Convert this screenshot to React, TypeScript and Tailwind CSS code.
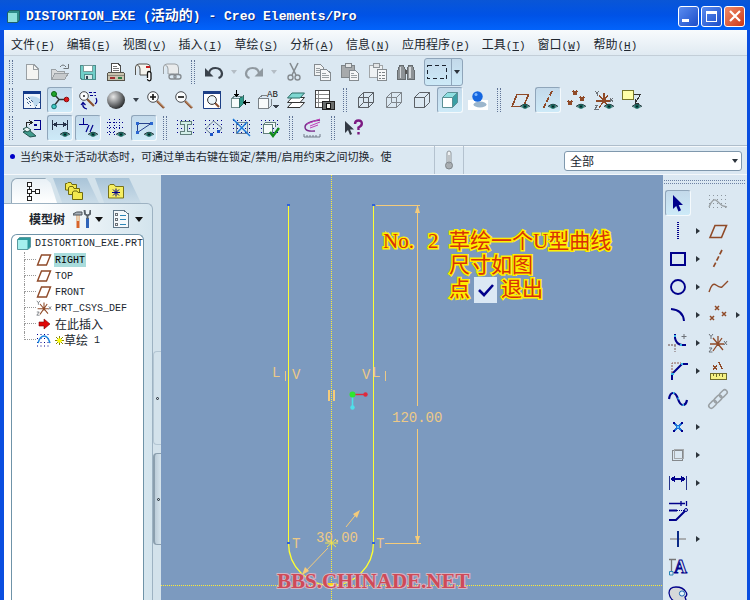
import type { ReactNode } from "react";
import clsx from "clsx";

type Tool = { icon?: ReactNode; label: string; active?: boolean; menu?: boolean };

const NAVY = "#00008b";
const BROWN = "#8f4a28";
const GRAY = "#9aa0a4";
const INK = "#3a424c";

/* ---------- icons ---------- */

function Icon({ children, soft }: { children: ReactNode; soft?: boolean }) {
  return (
    <svg
      viewBox="0 0 20 20"
      className="size-5 shrink-0 overflow-visible"
      fill="none"
      shapeRendering={soft ? "auto" : "crispEdges"}
      aria-hidden="true"
    >
      {children}
    </svg>
  );
}

function Eye() {
  return (
    <g shapeRendering="auto">
      <path d="M10 16.5Q15 11.5 20 16.5Q15 20.5 10 16.5Z" fill="#5f8f8c" />
      <path d="M10 16.5Q15 12 20 16.5" stroke="#26393f" />
      <circle cx="15" cy="16.5" r="2.3" fill="#15695f" />
      <circle cx="15" cy="16.5" r="1" fill="#0a1c22" />
    </g>
  );
}

function DotGrid({ color = NAVY }: { color?: string }) {
  return (
    <path
      d="M1.5 2V18M5.5 2V18M9.5 2V18M13.5 2V18M17.5 2V18"
      stroke={color}
      strokeDasharray="1 3"
    />
  );
}

function Cube({ front = "#f4f6f8", side = "#c9ced4", top = "#e4e8ec", line = "#5b6066", back = false }) {
  return (
    <g strokeLinejoin="round" stroke={line} shapeRendering="auto">
      <path d="M2.5 7.5L7.5 2.5H17.5L12.5 7.5Z" fill={top} />
      <path d="M12.5 7.5L17.5 2.5V12.5L12.5 17.5Z" fill={side} />
      <path d="M2.5 7.5H12.5V17.5H2.5Z" fill={front} />
      {back && <path d="M7.5 2.5V12.5H17.5M7.5 12.5L2.5 17.5" />}
    </g>
  );
}

function Lens({ sign }: { sign?: string }) {
  return (
    <Icon soft>
      <path d="M11 11L18 18" stroke="#8a5030" strokeWidth="2.4" />
      <path d="M11.5 11L18 17.2" stroke="#e2c29a" strokeWidth="0.8" />
      <circle cx="7" cy="7" r="5.3" fill="#fafcfd" stroke="#4a4d52" />
      {sign && <path d={sign} stroke="#111" strokeWidth="1.6" />}
    </Icon>
  );
}

const planeShape = <path d="M2 16.5L7 4.5H18.5L13.5 16.5Z" stroke={BROWN} strokeWidth="1.6" />;
const axisShape = <path d="M14 1L5 19" stroke={BROWN} strokeWidth="1.7" strokeDasharray="5 2" />;
const pointsShape = (
  <path
    d="M7 1L11 5M11 1L7 5M14 7L18 11M18 7L14 11M2 11L6 15M6 11L2 15"
    stroke={BROWN}
    strokeWidth="1.5"
  />
);
const csysShape = (
  <g>
    <path d="M2 11H16M5 18L14 5M5 5L15 17M10 3V13" stroke={BROWN} strokeWidth="1.3" />
    <path d="M1 1L3 3.5L5 1M3 3.5V6M16 8L19 12M19 8L16 12M1 15H4L1 19H4.5" stroke="#6c7177" />
  </g>
);

const pageNew = (
  <Icon>
    <path d="M4.5 2.5H12L16.5 7V17.5H4.5Z" fill="#f4f4f2" stroke={GRAY} />
    <path d="M11.5 2.5V7.5H16.5" stroke={GRAY} />
  </Icon>
);
const folderOpen = (
  <Icon>
    <path d="M1.5 17.5V7.5H5.5L7 9H14.5V11" fill="#d8dadb" stroke={GRAY} />
    <path d="M1.5 17.5L5 11H18.5L14.5 17.5Z" fill="#c7cacc" stroke={GRAY} />
    <path d="M10 5Q13 1 16 5M13.5 6.5H18.5V2" stroke="#6f7579" shapeRendering="auto" />
  </Icon>
);
const disk = (
  <Icon>
    <path d="M2.5 3.5H17.5V17.5H4L2.5 16Z" fill="#70cfc9" stroke="#4d8d8c" />
    <path d="M5.5 3.5H14.5V9.5H5.5Z" fill="#fff" stroke="#7a9b9b" />
    <path d="M6 12.5H14V17.5H6Z" fill="#d9e9ea" stroke="#4d8d8c" />
    <path d="M8.5 14V17" stroke="#345" strokeWidth="2" />
  </Icon>
);
const printer = (
  <Icon>
    <path d="M5.5 10.5V1.5H12L14.5 4V10.5Z" fill="#fff" stroke="#4b4b4b" />
    <path d="M7 4.5H11M7 6.5H13M7 8.5H13" stroke="#777" />
    <path d="M2.5 10.5H17.5L18.5 12V18.5H1.5V12Z" fill="#c8c3ae" stroke="#54524a" />
    <path d="M2 13.5H18" stroke="#8b877a" />
    <path d="M4 15.5H9" stroke="#a03030" strokeWidth="2" />
    <path d="M12 15.5H16" stroke="#2b7a45" strokeWidth="2" />
  </Icon>
);
const mailClip = (
  <Icon soft>
    <path d="M1.5 13V5Q2 2 5 2H13Q16.5 2 16.5 6V13H6V7Q6 3.5 3.5 3.5" fill="#f5f4ee" stroke="#55534e" />
    <path d="M12 5H16" stroke="#c62020" strokeWidth="2" />
    <path d="M13.5 16V11Q13.5 9.5 15 9.5T17 11V17Q17 18.8 15.3 18.8T13.5 17" stroke="#111" strokeWidth="1.3" fill="#fff" />
  </Icon>
);
const mailLink = (
  <Icon soft>
    <path d="M1.5 12V5Q2 2 5 2H13Q16.5 2 16.5 6V12H6V7Q6 3.5 3.5 3.5" fill="#e9ebec" stroke={GRAY} />
    <rect x="7" y="12.5" width="7" height="4.5" rx="2.2" stroke="#858b90" strokeWidth="1.3" />
    <rect x="12" y="12.5" width="7" height="4.5" rx="2.2" stroke="#858b90" strokeWidth="1.3" />
  </Icon>
);
const undo = (
  <Icon soft>
    <path d="M5 11Q6 6 11.5 6T18 11.5Q18 15 14.5 16" stroke={INK} strokeWidth="2.2" />
    <path d="M1 6V14.5H9.5Z" fill={INK} />
  </Icon>
);
const redo = (
  <Icon soft>
    <path d="M15 11Q14 6 8.5 6T2 11.5Q2 15 5.5 16" stroke="#9099a0" strokeWidth="2.2" />
    <path d="M19 6V14.5H10.5Z" fill="#9099a0" />
  </Icon>
);
const scissors = (
  <Icon soft>
    <path d="M6 1L12 13M14 1L8 13" stroke="#858b90" strokeWidth="1.6" />
    <circle cx="6.5" cy="15.5" r="2.5" stroke="#858b90" strokeWidth="1.4" />
    <circle cx="13.5" cy="15.5" r="2.5" stroke="#858b90" strokeWidth="1.4" />
  </Icon>
);
const copy = (
  <Icon>
    <path d="M2.5 2.5H8.5L11.5 5.5V13.5H2.5Z" fill="#f1f3f4" stroke="#858b90" />
    <path d="M4 6.5H8M4 8.5H8M4 10.5H8" stroke={GRAY} />
    <path d="M8.5 7.5H14.5L18.5 11V18.5H8.5Z" fill="#f6f7f8" stroke="#858b90" />
    <path d="M10 11.5H14M10 13.5H17M10 15.5H17" stroke={GRAY} />
  </Icon>
);
const clipboard = (
  <Icon>
    <path d="M1.5 3.5H14.5V15.5H1.5Z" fill="#a7aaac" stroke="#7f8589" />
    <path d="M5 1.5H11V5.5H5Z" fill="#e3e5e6" stroke="#7f8589" />
    <path d="M9.5 8.5H15.5L18.5 11.5V18.5H9.5Z" fill="#f6f7f8" stroke="#858b90" />
    <path d="M11 11.5H14M11 13.5H17M11 15.5H17" stroke={GRAY} />
  </Icon>
);
const clipboardList = (
  <Icon>
    <path d="M1.5 3.5H14.5V15.5H1.5Z" fill="#eef1f3" stroke="#a2a6a9" />
    <path d="M5 1.5H11V5.5H5Z" fill="#e3e5e6" stroke="#8f9599" />
    <path d="M9.5 7.5H18.5V18.5H9.5Z" fill="#f6f7f8" stroke="#858b90" />
    <path d="M11 10.5H13M14 10.5H17M11 13.5H13M14 13.5H17M11 16H13M14 16H17" stroke="#7c8286" />
  </Icon>
);
const binoculars = (
  <Icon>
    <path d="M3.5 3.5H7.5L9 7V17H1.5V9Z" fill="#8d9296" stroke="#666c70" />
    <path d="M12.5 3.5H16.5L18.5 9V17H11V7Z" fill="#8d9296" stroke="#666c70" />
    <path d="M9 8H11V12H9Z" fill="#555" />
    <path d="M4.5 5V16M14 5V16" stroke="#d3d7da" strokeWidth="1.5" />
  </Icon>
);
const marquee = (
  <svg viewBox="0 0 20 16" className="h-4 w-5" fill="none" shapeRendering="crispEdges" aria-hidden="true">
    <rect x="0.5" y="1.5" width="19" height="13" stroke="#1c2430" strokeDasharray="4 3" />
  </svg>
);

const repaint = (
  <Icon>
    <path d="M1.5 1.5H18.5V18.5H1.5Z" fill="#eef5fb" stroke="#1d3f86" />
    <path d="M1 2H19" stroke="#123a8a" strokeWidth="3" />
    <path d="M6 7Q13 5 18 9V12L13 17.5Q11 11 6 7Z" fill="#bcd9ee" shapeRendering="auto" />
    <path d="M4 8L9 13M6 7L11 12M5 12L9 16M13 17.5L18 12" stroke="#3a5d86" strokeDasharray="1 1" />
  </Icon>
);
const spinCenter = (
  <Icon soft>
    <path d="M4 4L9 9.5H15M9 9.5L4 16" stroke="#333" strokeWidth="1.4" />
    <circle cx="4" cy="4" r="2.5" fill="#1fa52b" stroke="#0b6414" />
    <circle cx="16.5" cy="9.5" r="2.3" fill="#e01818" stroke="#8a0c0c" />
    <circle cx="4" cy="16.5" r="2.3" fill="#3fc8c4" stroke="#15706e" />
  </Icon>
);
const orientMode = (
  <Icon soft>
    <path d="M9 9L16 16" stroke="#8a5030" strokeWidth="2.2" />
    <circle cx="6" cy="6" r="4.3" fill="#fafcfd" stroke="#4a4d52" />
    <circle cx="6" cy="6" r="1" fill="#222" />
    <path d="M11 2.5H18M12 5.5H18" stroke={NAVY} strokeDasharray="3 1.5" />
    <path d="M18 8Q20 12 17 14M9 19Q4 18 5 13M3 15L5 12.5L7.5 15" stroke={NAVY} strokeWidth="1.2" />
  </Icon>
);
const sphere = (
  <Icon soft>
    <defs>
      <radialGradient id="ball" cx="35%" cy="32%" r="70%">
        <stop offset="0" stopColor="#e8e8e8" />
        <stop offset="0.5" stopColor="#8a8c8e" />
        <stop offset="1" stopColor="#2c2e30" />
      </radialGradient>
    </defs>
    <circle cx="10" cy="10" r="9" fill="url(#ball)" />
  </Icon>
);
const refit = (
  <Icon soft>
    <path d="M1.5 1.5H18.5V18.5H1.5Z" fill="#fff" stroke="#1d3f86" />
    <path d="M1 2.5H19" stroke="#1d3f86" strokeWidth="3" />
    <path d="M13 13L17 17" stroke="#8a5030" strokeWidth="2" />
    <circle cx="10" cy="10" r="4.4" fill="#eaf5fa" stroke="#333" />
  </Icon>
);
const reorient = (
  <Icon>
    <path d="M1.5 8.5H9.5V17.5H1.5Z" fill="#f6fbfb" stroke="#6f8b8c" />
    <path d="M9.5 8.5L13 6V14L9.5 17.5Z" fill="#2f9b8b" stroke="#2b6c66" />
    <path d="M1.5 8.5L5 6H13" stroke="#6f8b8c" />
    <path d="M6.5 0V5M14 12.5H20" stroke="#000" strokeWidth="1.2" />
    <path d="M4 4H9L6.5 7ZM16 10V15L13 12.5Z" fill="#000" />
  </Icon>
);
const savedViews = (
  <Icon>
    <path d="M0.5 8.5H10.5V18.5H0.5Z" fill="#f7fafb" stroke="#7a8288" />
    <path d="M0.5 8.5L4 5.5H9M10.5 18.5L13 16V9" stroke="#7a8288" />
    <text x="9" y="7" fontSize="9" fontFamily="Liberation Mono, monospace" fill="#111">AB</text>
    <path d="M15 15H21L18 18.5Z" fill={INK} />
  </Icon>
);
const layers = (
  <Icon soft>
    <path d="M1.5 17.5L6 12.5H18.5L14 17.5Z" fill="#fff" stroke="#333" />
    <path d="M1.5 12.5L6 7.5H18.5L14 12.5Z" fill="#fff" stroke="#333" />
    <path d="M1.5 8L6 3H18.5L14 8Z" fill="#7fd8d2" stroke="#2b6c66" />
  </Icon>
);
const viewManager = (
  <Icon>
    <path d="M1.5 0.5H15.5V17.5H1.5Z" fill="#fff" stroke="#444" />
    <path d="M4.5 1V17M2 4.5H15M2 8.5H15M2 12.5H15" stroke="#888" />
    <path d="M8 11.5H20V19.5H8Z" fill="#6a6d6c" stroke="#222" />
    <path d="M12 13H16V18H12Z" fill="#f3f3ee" stroke="#111" />
  </Icon>
);
const realtime = (
  <Icon soft>
    <path d="M0 10H20V20H0Z" fill="#fff" />
    <ellipse cx="12" cy="14.5" rx="6.5" ry="3" fill="#9cb6cc" />
    <circle cx="9.5" cy="6.5" r="5.2" fill="#1466e0" />
    <circle cx="8" cy="4.5" r="1.5" fill="#7db8ff" />
  </Icon>
);
const annotation = (
  <Icon>
    <path d="M0.5 0.5H11.5V9.5H0.5Z" fill="#ffffa8" stroke="#77762a" />
    <path d="M12 4.5H18.5L14 12M13 9V13H17" stroke="#333" />
    <Eye />
  </Icon>
);

const sketchView = (
  <Icon>
    <path d="M12 2.5H18.5V11.5H12M12 7H15" stroke={NAVY} strokeWidth="1.6" />
    <path d="M4.5 9V4.5H9M7 2L10 4.5L7 7" stroke="#222" />
    <path d="M1 14L7 12L14 18L8 19Z" fill="#419b8d" stroke="#20544d" shapeRendering="auto" />
    <path d="M1 11L5 9L9 12L5 14Z" fill="#e7f3f2" stroke="#20544d" shapeRendering="auto" />
  </Icon>
);
const showDims = (
  <Icon>
    <path d="M2.5 2V12M17.5 2V12M3 6.5H17" stroke="#253047" />
    <path d="M3 6.5L7 3.5V9.5ZM17 6.5L13 3.5V9.5Z" fill="#253047" />
    <Eye />
  </Icon>
);
const showConstraints = (
  <Icon>
    <path d="M5.5 0V6M1 6.5H10" stroke={NAVY} />
    <path d="M8 14L11 7M12 14L15 7" stroke={NAVY} strokeWidth="1.2" shapeRendering="auto" />
    <Eye />
  </Icon>
);
const showGrid = (
  <Icon>
    <path d="M3.5 1V18M8.5 1V18M13.5 1V12M1 4.5H19M1 9.5H19M1 14.5H10" stroke={NAVY} strokeDasharray="1 2" />
    <Eye />
  </Icon>
);
const showVertices = (
  <Icon>
    <path d="M3.5 5.5H17L3.5 14.5Z" stroke="#26418c" shapeRendering="auto" />
    <path d="M2 4H5V7H2ZM16 4H19V7H16ZM2 13H5V16H2Z" fill="#2a66d0" />
    <Eye />
  </Icon>
);
const shadeLoop = (
  <Icon>
    <DotGrid />
    <path d="M4.5 3.5H15.5V6.5H11.5V13.5H15.5V16.5H4.5V13.5H8.5V6.5H4.5Z" fill="#d4efe9" stroke="#62807c" />
  </Icon>
);
const openEnds = (
  <Icon>
    <DotGrid />
    <path d="M7 16L1.5 11L9.5 3L18 10L14 15" stroke="#6c7f93" shapeRendering="auto" />
    <path d="M5.5 15H9V18H5.5ZM13 12H16V15H13Z" fill="#1c55c8" />
  </Icon>
);
const overlap = (
  <Icon>
    <DotGrid />
    <path d="M4.5 4.5H15.5V15.5H4.5Z" stroke="#6c7f93" />
    <path d="M1 1L18 18M15 4L5 15" stroke="#1c78d8" strokeWidth="1.5" shapeRendering="auto" />
  </Icon>
);
const featureCheck = (
  <Icon>
    <DotGrid />
    <path d="M3.5 6.5H12.5V15.5H3.5ZM3.5 6.5L6 4H15.5V9" fill="#f4fafa" stroke="#62807c" />
    <path d="M10 14L13 18L19 10" stroke="#118a1c" strokeWidth="2.4" shapeRendering="auto" />
  </Icon>
);
const curvature = (
  <Icon soft>
    <path d="M18 2Q3 4 3 9T13 13" stroke="#7a2a8c" strokeWidth="1.4" />
    <path d="M18 1L5 6M18 4L8 8M16 7L8 10" stroke="#c23ab8" />
    <path d="M2 16V19H18V16M5 17V19M8 17V19M11 17V19M14 17V19" stroke="#707a88" />
  </Icon>
);
const whatsThis = (
  <Icon soft>
    <path d="M1 3V15L4 12L6 17L8 16L6 11.5H10Z" fill="#333a44" />
    <path d="M11 6Q11 2.5 14.5 2.5T17.8 5.8Q17.8 8 14.5 9.5V12M14.5 14V16.5" stroke="#7c1a82" strokeWidth="2.4" />
  </Icon>
);

const pointer = (
  <Icon soft>
    <path d="M5 2V16L8.2 13L10.5 18.5L13 17.3L10.7 12H15Z" fill={NAVY} />
  </Icon>
);
const sketchIcon = (
  <Icon>
    <DotGrid color="#8d979f" />
    <path d="M1 14Q5 4 9 8T15 13L19 14" stroke={GRAY} strokeWidth="1.3" shapeRendering="auto" />
  </Icon>
);

const viewRow: Tool[][] = [
  [
    { icon: repaint, label: "重画" },
    { icon: spinCenter, label: "旋转中心", active: true },
    { icon: orientMode, label: "定向模式" },
    { icon: sphere, label: "外观库", menu: true },
    { icon: <Lens sign="M4 7H10M7 4V10" />, label: "放大" },
    { icon: <Lens sign="M4 7H10" />, label: "缩小" },
    { icon: refit, label: "重新调整" },
    { icon: reorient, label: "重定向" },
    { icon: savedViews, label: "已命名视图" },
    { icon: layers, label: "层" },
    { icon: viewManager, label: "视图管理器" },
  ],
  [
    { icon: <Icon><Cube front="none" side="none" top="none" back /></Icon>, label: "线框" },
    { icon: <Icon><Cube front="none" side="none" top="none" line="#7f858b" back /></Icon>, label: "隐藏线" },
    { icon: <Icon><Cube front="none" side="none" top="none" /></Icon>, label: "消隐" },
    { icon: <Icon><Cube front="#ffffff" side="#3a9fa5" top="#8fdfe0" line="#5a8f94" /></Icon>, label: "着色", active: true },
    { icon: realtime, label: "增强的真实感" },
  ],
  [
    { icon: <Icon>{planeShape}<Eye /></Icon>, label: "平面显示" },
    { icon: <Icon>{axisShape}<Eye /></Icon>, label: "轴显示", active: true },
    { icon: <Icon>{pointsShape}<Eye /></Icon>, label: "点显示" },
    { icon: <Icon>{csysShape}<Eye /></Icon>, label: "坐标系显示" },
    { icon: annotation, label: "注释显示" },
  ],
];

const sketchRow: Tool[][] = [
  [
    { icon: sketchView, label: "草绘方向" },
    { icon: showDims, label: "显示尺寸", active: true },
    { icon: showConstraints, label: "显示约束", active: true },
    { icon: showGrid, label: "显示栅格" },
    { icon: showVertices, label: "显示顶点", active: true },
  ],
  [
    { icon: shadeLoop, label: "着色封闭环" },
    { icon: openEnds, label: "加亮开放端点" },
    { icon: overlap, label: "重叠几何" },
    { icon: featureCheck, label: "特征要求" },
  ],
  [{ icon: curvature, label: "曲率分析" }],
  [{ icon: whatsThis, label: "上下文帮助" }],
];

const fileRow: Tool[][] = [
  [
    { icon: pageNew, label: "新建" },
    { icon: folderOpen, label: "打开" },
    { icon: disk, label: "保存" },
    { icon: printer, label: "打印" },
    { icon: mailClip, label: "发送附件" },
    { icon: mailLink, label: "发送链接" },
  ],
  [
    { icon: undo, label: "撤消", menu: true },
    { icon: redo, label: "重做", menu: true },
    { icon: scissors, label: "剪切" },
    { icon: copy, label: "复制" },
    { icon: clipboard, label: "粘贴" },
    { icon: clipboardList, label: "选择性粘贴" },
    { icon: binoculars, label: "查找" },
  ],
];

/* each row: sketch tool, then datum tool */
const railRows: [Tool, Tool?][] = [
  [{ icon: pointer, label: "选取", active: true }, { icon: sketchIcon, label: "草绘" }],
  [
    { icon: <Icon><path d="M10 1V19" stroke={NAVY} strokeWidth="2" strokeDasharray="1 1" /></Icon>, label: "线", menu: true },
    { icon: <Icon soft>{planeShape}</Icon>, label: "基准平面" },
  ],
  [
    { icon: <Icon><path d="M3 4H17V16H3Z" stroke={NAVY} strokeWidth="2" /></Icon>, label: "矩形", menu: true },
    { icon: <Icon soft>{axisShape}</Icon>, label: "基准轴" },
  ],
  [
    { icon: <Icon soft><circle cx="10" cy="10" r="7" stroke={NAVY} strokeWidth="1.9" /></Icon>, label: "圆", menu: true },
    { icon: <Icon soft><path d="M1 15Q4 5 8 8T14 10L20 4" stroke={BROWN} strokeWidth="1.4" /></Icon>, label: "基准曲线" },
  ],
  [
    { icon: <Icon soft><path d="M3 4Q15 5 16 16" stroke={NAVY} strokeWidth="2" /></Icon>, label: "圆弧", menu: true },
    { icon: <Icon soft>{pointsShape}</Icon>, label: "基准点", menu: true },
  ],
  [
    {
      icon: (
        <Icon soft>
          <path d="M7 1V5Q8 11 14 12H18" stroke={NAVY} strokeWidth="2" />
          <path d="M7 12V19M0 12H8" stroke="#8f7f80" strokeDasharray="2 1" strokeWidth="1.3" />
          <path d="M16 1V6M13.5 3.5H18.5" stroke="#6c7177" />
          <path d="M6 3H8M12 12H14" stroke="#38b8e8" strokeWidth="2" />
        </Icon>
      ),
      label: "圆角",
      menu: true,
    },
    { icon: <Icon soft>{csysShape}</Icon>, label: "基准坐标系" },
  ],
  [
    {
      icon: (
        <Icon soft>
          <path d="M4 19V13L14 3H20" stroke={NAVY} strokeWidth="2" />
          <path d="M4 12V2H13" stroke="#8f5a50" strokeDasharray="2 1" />
          <path d="M3 13H6M13 3H15" stroke="#38b8e8" strokeWidth="2" />
        </Icon>
      ),
      label: "倒角",
      menu: true,
    },
    {
      icon: (
        <Icon>
          <path d="M5 4L9 9M9 4L5 9M11 1L14 8" stroke={BROWN} strokeWidth="1.4" />
          <path d="M2.5 12.5H18.5V18.5H2.5Z" fill="#f5f183" stroke="#6f6c2c" />
          <path d="M5.5 13V15M8.5 13V16M11.5 13V15M14.5 13V16" stroke="#6f6c2c" />
        </Icon>
      ),
      label: "分析点",
    },
  ],
  [
    {
      icon: (
        <Icon soft>
          <path d="M1 10Q2 4 5 4Q8 4 10 10T15 16Q18 16 19 11" stroke={NAVY} strokeWidth="2.2" />
          <path d="M5 4H6.5M9.5 9.5H11M14.5 16H16" stroke="#38b8e8" strokeWidth="2" />
        </Icon>
      ),
      label: "样条",
    },
    {
      icon: (
        <Icon soft>
          <g stroke={GRAY} strokeWidth="1.5" transform="rotate(-45 10 10)">
            <rect x="-2" y="7.5" width="9" height="5" rx="2.5" />
            <rect x="5.5" y="7.5" width="9" height="5" rx="2.5" />
            <rect x="13" y="7.5" width="9" height="5" rx="2.5" />
          </g>
        </Icon>
      ),
      label: "链接",
    },
  ],
  [
    {
      icon: (
        <Icon>
          <path d="M6 6L14 14M14 6L6 14" stroke="#1d6fd6" strokeWidth="1.8" />
          <path d="M5 5H7V7H5ZM13 5H15V7H13ZM5 13H7V15H5ZM13 13H15V15H13Z" fill={NAVY} />
          <path d="M9 9H11V11H9Z" fill="#54c8ff" />
        </Icon>
      ),
      label: "点",
      menu: true,
    },
  ],
  [
    {
      icon: (
        <Icon>
          <path d="M4.5 5.5H14.5V15.5H4.5Z" stroke="#85898c" />
          <path d="M6.5 4.5H15.5V13.5H6.5Z" stroke="#a5a9ac" />
        </Icon>
      ),
      label: "使用边",
      menu: true,
    },
  ],
  [
    {
      icon: (
        <Icon>
          <path d="M1.5 3V17M18.5 3V17" stroke="#26348c" />
          <path d="M3 6H17" stroke={NAVY} strokeWidth="2" />
          <path d="M2.5 6L7 2.5V9.5ZM17.5 6L13 2.5V9.5Z" fill={NAVY} />
        </Icon>
      ),
      label: "尺寸",
      menu: true,
    },
  ],
  [
    {
      icon: (
        <Icon soft>
          <path d="M1 2.5H17M18.5 0V5M13 0V5" stroke={NAVY} strokeWidth="1.3" />
          <path d="M1 9.5H9M1 19H8L17 10" stroke={NAVY} strokeWidth="2" />
          <path d="M9 9.5H17" stroke={NAVY} strokeDasharray="1 1" />
          <circle cx="18" cy="9" r="1.5" stroke={NAVY} />
        </Icon>
      ),
      label: "修改",
    },
  ],
  [
    {
      icon: (
        <Icon>
          <path d="M2 10H18" stroke="#a9adb0" strokeWidth="2" />
          <path d="M10 2V18" stroke="#0b2b87" strokeWidth="2" />
        </Icon>
      ),
      label: "约束",
      menu: true,
    },
  ],
  [
    {
      icon: (
        <Icon soft>
          <path d="M1 2.5H8M3.5 3V15" stroke="#777" strokeWidth="1.3" />
          <path d="M1.5 14.5H5V18H1.5Z" stroke="#2b86b8" />
          <text x="6" y="16" fontSize="18" fontWeight="700" fontFamily="Liberation Serif, serif" fill="#dbe3ea" stroke={NAVY}>A</text>
        </Icon>
      ),
      label: "文本",
    },
  ],
  [
    {
      icon: (
        <Icon soft>
          <path d="M1 8Q1 2 8 2T18 7Q20 10 17 12L19 18H11Q2 16 1 8Z" fill="#d6d8da" stroke={NAVY} strokeWidth="1.3" />
          <circle cx="14" cy="8.5" r="2.6" fill="#e3f5fb" stroke="#1c66b8" />
        </Icon>
      ),
      label: "调色板",
    },
  ],
];

const menus: [string, string][] = [
  ["文件", "F"],
  ["编辑", "E"],
  ["视图", "V"],
  ["插入", "I"],
  ["草绘", "S"],
  ["分析", "A"],
  ["信息", "N"],
  ["应用程序", "P"],
  ["工具", "T"],
  ["窗口", "W"],
  ["帮助", "H"],
];

/* ---------- controls ---------- */

function Mono({ children }: { children: ReactNode }) {
  return <span className="font-['Liberation_Mono',monospace] text-[10px]">{children}</span>;
}

function Handle() {
  return (
    <span className="flex w-3.5 shrink-0 justify-center py-0.5">
      <span className="w-1 border-x border-dotted border-[#5f7396]" />
    </span>
  );
}

function ToolButton({ tool }: { tool: Tool }) {
  return (
    <button
      type="button"
      aria-label={tool.label}
      className={clsx(
        "m-px flex size-[26px] shrink-0 items-center justify-center rounded-[3px] border",
        tool.active
          ? "border-[#8fa5ba] border-r-[#f4f9fc] border-b-[#f4f9fc] bg-linear-to-b from-[#c3d9ea] to-[#cdeaf8]"
          : "border-transparent",
      )}
    >
      {tool.icon}
    </button>
  );
}

function ToolBar({ groups, children }: { groups: Tool[][]; children?: ReactNode }) {
  return (
    <div className="flex h-7" role="toolbar">
      {groups.map((group, i) => (
        <div key={i} className="flex">
          <Handle />
          {group.map((tool) => (
            <div key={tool.label} className="flex items-center">
              <ToolButton tool={tool} />
              {tool.menu && (
                <span className="flex w-3 justify-center">
                  <span
                    className={clsx(
                      "border-x-[3px] border-t-[4px] border-x-transparent",
                      tool.icon === sphere ? "border-t-[#3a424c]" : "border-t-[#b4bdc5]",
                    )}
                  />
                </span>
              )}
            </div>
          ))}
        </div>
      ))}
      {children}
    </div>
  );
}

function TitleBar() {
  const box = "flex size-[21px] items-center justify-center rounded-[3px] border border-white";
  return (
    <header className="flex h-[30px] shrink-0 items-center bg-linear-to-b from-[#0a56d6] via-[#0052e6] via-50% to-[#0263fb] pt-0.5 pr-[5px] pl-[7px]">
      <svg viewBox="0 0 13 13" className="size-[13px]" aria-hidden="true">
        <path d="M0.5 2.5L2.5 0.5H12.5V10L10.5 12.5H0.5Z" fill="#2f8d8a" stroke="#1d5f6a" />
        <path d="M1 3H10V12H1Z" fill="#8fe0dc" />
      </svg>
      <h1 className="ml-1.5 flex-1 truncate font-['Liberation_Mono','Noto_Sans_CJK_SC',monospace] text-[13px] font-bold text-white [text-shadow:1px_1px_#0a2a80]">
        DISTORTION_EXE (<span className="text-[14px]">活动的</span>) - Creo Elements/Pro
      </h1>
      <div className="flex gap-0.5">
        <button type="button" aria-label="最小化" className={clsx(box, "bg-linear-to-br from-[#5b8cf0] to-[#1c4cc8]")}>
          <span className="mt-2 mr-1.5 h-[3px] w-[7px] bg-white" />
        </button>
        <button type="button" aria-label="最大化" className={clsx(box, "bg-linear-to-br from-[#5b8cf0] to-[#1c4cc8]")}>
          <span className="size-[11px] border border-t-[3px] border-white" />
        </button>
        <button type="button" aria-label="关闭" className={clsx(box, "bg-linear-to-br from-[#ef8a68] to-[#cc3411]")}>
          <svg viewBox="0 0 12 12" className="size-3" stroke="#fff" strokeWidth="2.2" aria-hidden="true">
            <path d="M1 1L11 11M11 1L1 11" />
          </svg>
        </button>
      </div>
    </header>
  );
}

function MenuBar() {
  return (
    <nav className="flex h-[26px] shrink-0 items-center gap-3 border-b border-[#c3ced8] bg-linear-to-b from-[#f8fbfd] to-[#e0eaf2] px-[7px] pt-1">
      {menus.map(([name, key]) => (
        <button key={key} type="button" className="whitespace-nowrap leading-4">
          {name}
          <span className="font-['Liberation_Mono',monospace] text-[11px]">
            (<u>{key}</u>)
          </span>
        </button>
      ))}
    </nav>
  );
}

function MessageBar() {
  return (
    <div className="flex h-[30px] shrink-0 items-stretch border-t border-b border-t-[#aebdcb] border-b-[#f4f8fb] pl-1.5 shadow-[inset_0_1px_#f4f8fb]">
      <p className="flex w-[424px] items-start gap-[5px] pt-0.5 text-[11px] leading-4 whitespace-nowrap">
        <span className="mt-[6px] size-[5px] rounded-full bg-[#0000c8]" />
        当约束处于活动状态时，可通过单击右键在锁定/禁用/启用约束之间切换。使
      </p>
      <div className="flex w-[30px] items-center justify-center border-x border-[#b4c2cf]">
        <svg viewBox="0 0 10 20" className="h-5 w-2.5" aria-hidden="true">
          <rect x="3" y="1" width="4" height="13" rx="2" fill="#eef1f3" stroke="#8f969b" />
          <circle cx="5" cy="15.5" r="3.5" fill="#a9aeb2" stroke="#80868a" />
          <path d="M5 5V14" stroke="#8f969b" />
        </svg>
      </div>
      <div className="flex flex-1 items-center justify-end pt-0.5 pr-[5px]">
        <div className="relative w-[178px]">
          <select
            aria-label="过滤器"
            className="block h-5 w-full appearance-none rounded-[3px] border border-[#7f98ad] bg-white px-[5px] leading-4"
          >
            <option>全部</option>
          </select>
          <span className="pointer-events-none absolute top-2 right-1 border-x-[3px] border-t-[4px] border-x-transparent border-t-[#2c343c]" />
        </div>
      </div>
    </div>
  );
}

/* ---------- model tree ---------- */

const treePlane = (
  <svg viewBox="0 0 16 14" className="h-3.5 w-4" fill="none" aria-hidden="true">
    <path d="M1.5 12L5.5 2H14.5L10.5 12Z" stroke={BROWN} strokeWidth="1.4" />
  </svg>
);

const treeItems: { icon: ReactNode; text: ReactNode; selected?: boolean }[] = [
  { icon: treePlane, text: <Mono>RIGHT</Mono>, selected: true },
  { icon: treePlane, text: <Mono>TOP</Mono> },
  { icon: treePlane, text: <Mono>FRONT</Mono> },
  {
    icon: (
      <svg viewBox="0 0 20 20" className="size-4" fill="none" aria-hidden="true">
        {csysShape}
      </svg>
    ),
    text: <Mono>PRT_CSYS_DEF</Mono>,
  },
  {
    icon: (
      <svg viewBox="0 0 16 14" className="h-3.5 w-4" aria-hidden="true">
        <path d="M3 5H8V2L14 7L8 12V9H3Z" fill="#e00808" stroke="#7a0606" strokeWidth="0.6" />
      </svg>
    ),
    text: "在此插入",
  },
  {
    icon: (
      <svg viewBox="0 0 16 14" className="h-3.5 w-4" fill="none" aria-hidden="true">
        <path d="M1 1.5H15M1 5.5H15M1 9.5H15M1 13H15" stroke={NAVY} strokeDasharray="1 2.5" />
        <path d="M2 10Q4 3 8 3T14 10" stroke="#1c86e0" strokeWidth="1.5" />
      </svg>
    ),
    text: (
      <>
        <svg viewBox="0 0 9 9" className="inline size-[9px]" aria-hidden="true">
          <path d="M4.5 0V9M0 4.5H9M1 1L8 8M8 1L1 8" stroke="#8a8a00" />
          <circle cx="4.5" cy="4.5" r="2.3" fill="#ffff00" />
        </svg>
        草绘<Mono> 1</Mono>
      </>
    ),
  },
];

function Caret() {
  return <span className="border-x-4 border-t-[5px] border-x-transparent border-t-[#111]" />;
}

function ModelTree() {
  return (
    <aside className="flex w-[157px] shrink-0 flex-col bg-[#d3e2eb]">
      <div className="flex h-7 items-end pl-[7px]" role="tablist">
        <button
          type="button"
          role="tab"
          aria-label="模型树"
          className="flex h-[25px] w-[46px] items-center justify-center rounded-tl-md border-t border-l border-[#93a8b8] bg-linear-to-b from-[#e9f1f6] to-white [clip-path:polygon(0_0,74%_0,86%_20%,100%_100%,0_100%)]"
        >
          <svg viewBox="0 0 16 20" className="mr-1 h-5 w-4" fill="#fff" stroke="#222" shapeRendering="crispEdges" aria-hidden="true">
            <path d="M4.5 4V16M4 10.5H12" />
            <path d="M2.5 1.5H6.5V5.5H2.5ZM2.5 8.5H6.5V12.5H2.5ZM2.5 15.5H6.5V19.5H2.5ZM10.5 8.5H14.5V12.5H10.5Z" />
          </svg>
        </button>
        <button
          type="button"
          role="tab"
          aria-label="文件夹浏览器"
          className="-ml-1 flex h-[25px] w-[46px] items-center justify-center bg-linear-to-b from-[#a9c4d8] to-[#cadce8] [clip-path:polygon(0_0,74%_0,100%_100%,20%_100%)]"
        >
          <svg viewBox="0 0 20 20" className="mr-1 size-5" fill="#f2e84f" stroke="#6f6a10" aria-hidden="true">
            <path d="M1.5 9V2.5H3L4 1.5H7L8 3.5H12.5V9.5Z" />
            <path d="M4.5 13.5V6.5L6 5.5H9L10 7.5H15.5V13.5Z" />
            <path d="M8.5 18.5V11L10 10H13L14 11.5H18.5V18.5Z" />
          </svg>
        </button>
        <button
          type="button"
          role="tab"
          aria-label="收藏夹"
          className="-ml-1 flex h-[25px] w-[46px] items-center justify-center bg-linear-to-b from-[#a9c4d8] to-[#cadce8] [clip-path:polygon(0_0,74%_0,100%_100%,20%_100%)]"
        >
          <svg viewBox="0 0 18 16" className="mr-1 h-4 w-[18px]" fill="#f6ee62" stroke="#77721a" aria-hidden="true">
            <path d="M1.5 15V3L3 1.5H7L8.5 3.5H16.5V15Z" />
            <path d="M9 5.5V13.5M5 9.5H13M6 6.5L12 12.5M12 6.5L6 12.5" stroke={NAVY} />
          </svg>
        </button>
      </div>
      <div className="flex flex-1">
        <section className="flex flex-1 flex-col rounded-tr-md border-t border-r border-[#9db2c2] bg-linear-to-r from-white from-20% to-[#d3e4ed]">
          <header className="flex h-[30px] items-center pl-[25px]">
            <h2 className="font-bold leading-4">模型树</h2>
            <button type="button" aria-label="设置" className="ml-2 flex items-center gap-1">
              <svg viewBox="0 0 18 20" className="h-5 w-[18px]" fill="none" aria-hidden="true">
                <path d="M5 6V19" stroke="#d8642a" strokeWidth="3" />
                <path d="M5 5V12" stroke="#ead2b0" strokeWidth="3" />
                <path d="M0 5Q3 2 9 3V6H0Z" fill="#a9b1b8" stroke="#4d555c" />
                <path d="M14.5 9V19" stroke="#2f63b8" strokeWidth="3" />
                <path d="M11.5 1L12 5L14.5 6.5L17 5L17.5 1M14.5 6V10" stroke="#59626a" strokeWidth="2" />
              </svg>
              <Caret />
            </button>
            <button type="button" aria-label="显示" className="ml-2.5 flex items-center gap-1.5">
              <svg viewBox="0 0 16 20" className="h-5 w-4" fill="none" shapeRendering="crispEdges" aria-hidden="true">
                <path d="M0.5 1.5H11L15.5 5V18.5H0.5Z" fill="#f4f8fb" stroke="#5f7688" />
                <path d="M2.5 4.5H4.5V6.5H2.5ZM2.5 9.5H4.5V11.5H2.5ZM2.5 14.5H4.5V16.5H2.5Z" stroke="#6c7177" />
                <path d="M7 6.5H13M7 10.5H13M7 15.5H13" stroke="#2b86b8" />
              </svg>
              <Caret />
            </button>
          </header>
          <div className="mr-2 ml-[7px] flex-1 overflow-hidden rounded-t-md border border-b-0 border-[#6f93a8] bg-white">
            <div className="flex h-[17px] items-center gap-1 pl-[5px]">
              <svg viewBox="0 0 14 13" className="h-[13px] w-3.5 shrink-0" aria-hidden="true">
                <path d="M0.5 2.5L2.5 0.5H13.5V10L11 12.5H0.5Z" fill="#2f9a9c" stroke="#5b9aa0" />
                <path d="M1 3H10.5V12H1Z" fill="#a5f0ee" />
              </svg>
              <Mono>DISTORTION_EXE.PRT</Mono>
            </div>
            <ul className="pl-3">
              {treeItems.map((item, i) => (
                <li key={i} className="flex h-4 items-center whitespace-nowrap">
                  <span className="flex h-4 w-3 flex-col">
                    <span className="h-2 border-b border-l border-dotted border-[#9a9a9a]" />
                    <span className={clsx("h-2", i < treeItems.length - 1 && "border-l border-dotted border-[#9a9a9a]")} />
                  </span>
                  {item.icon}
                  <span
                    className={clsx(
                      "ml-0.5 flex h-3.5 items-center px-px whitespace-pre",
                      item.selected && "bg-[#a9dcdc] text-black",
                    )}
                  >
                    {item.text}
                  </span>
                </li>
              ))}
            </ul>
          </div>
        </section>
        <div className="flex w-[9px] flex-col gap-2 pt-[148px]">
          <button type="button" aria-label="折叠" className="flex h-[94px] items-center justify-center rounded-l-sm border border-r-0 border-[#b3c6d3]">
            <span className="size-[3px] rounded-full border border-[#1c242c]" />
          </button>
          <button type="button" aria-label="展开" className="flex h-[92px] items-center justify-center rounded-l border border-r-0 border-l-2 border-[#8b9fae] bg-linear-to-r from-[#bccdd9] to-[#d6e4ec]">
            <span className="size-[3px] rounded-full border border-[#1c242c]" />
          </button>
        </div>
      </div>
    </aside>
  );
}

/* ---------- sketch canvas ---------- */

function SketchCanvas() {
  return (
    <main className="relative min-w-0 flex-1 overflow-hidden bg-[#7c9abf]">
      <svg className="absolute inset-0 size-full" fill="none" shapeRendering="crispEdges" aria-hidden="true">
        {/* datum references */}
        <path d="M170.5 0V425M0 410.5H502" stroke="#ffee30" strokeDasharray="1 1" />

        {/* U-shaped section */}
        <g stroke="#ffff30">
          <path d="M127.5 31V368M212.5 31V368" />
          <path d="M127.5 368A42.5 42.5 0 0 0 212.5 368" strokeWidth="1.3" shapeRendering="auto" />
        </g>
        <path d="M126 30h3M211 30h3M126 368h3M211 368h3" stroke="#2f62d8" strokeWidth="2" />

        {/* dimensions */}
        <g stroke="#f5cb7a">
          <path d="M215 30.5H259M224 368.5H260M256.5 31V231M256.5 254V368" />
          <path d="M185 352L197 337M167 373L142 399" shapeRendering="auto" />
        </g>
        <g fill="#f5cb7a">
          <path d="M256.5 30L259 38H254ZM256.5 369L259 361H254Z" shapeRendering="auto" />
          <path d="M199 335L196 343L192 339ZM141 400L144 392L148 396Z" shapeRendering="auto" />
          <path d="M167 215H169V226H167ZM172 215H174V226H172Z" />
        </g>
        <path d="M170.5 362V374M164 368H177M166 364L175 372M175 364L166 372" stroke="#f0e34a" shapeRendering="auto" />
        <path d="M166 409H176" stroke="#ffd21c" strokeWidth="2" />

        {/* spin centre */}
        <g shapeRendering="auto">
          <path d="M192 219.5H204" stroke="#e0283c" strokeWidth="1.4" />
          <path d="M191.5 220V232" stroke="#4fe0ea" strokeWidth="1.6" />
          <circle cx="204.5" cy="219.5" r="2.2" fill="#e0283c" />
          <circle cx="191.5" cy="232.5" r="2.2" fill="#4fe0ea" />
          <circle cx="191.5" cy="219.5" r="3" fill="#2fe62f" />
        </g>

        {/* constraint and dimension text */}
        <g fill="#ecc987" fontFamily="Liberation Mono, monospace" fontSize="14" shapeRendering="auto">
          <text x="111" y="202">L</text>
          <text x="131" y="204">V</text>
          <text x="201" y="204">V</text>
          <text x="211" y="202">L</text>
          <text x="131" y="373">T</text>
          <text x="215" y="373">T</text>
          <text x="231" y="247">120.00</text>
          <text x="155" y="367">30.00</text>
        </g>
        <path d="M124.5 196V206M224.5 196V206" stroke="#ecc987" />
      </svg>

      <div className="absolute top-[54px] left-[222px] flex font-['Liberation_Serif','Noto_Sans_CJK_SC',serif] text-[21px] leading-6 whitespace-nowrap text-[#d83208] [paint-order:stroke_fill] [-webkit-text-stroke:3px_#ffee00]">
        <p className="flex w-[66px] gap-3.5">
          <span>No.</span>
          <span>2</span>
        </p>
        <div>
          <p>草绘一个U型曲线</p>
          <p>尺寸如图</p>
          <p className="flex gap-1">
            点
            <span className="flex h-[26px] w-[23px] items-center justify-center bg-[#dbe8f4]">
              <svg viewBox="0 0 18 14" className="h-3.5 w-[18px]" fill="none" aria-hidden="true">
                <path d="M2 7L7 12L16 2" stroke={NAVY} strokeWidth="2.6" />
              </svg>
            </span>
            退出
          </p>
        </div>
      </div>

      <p className="absolute top-[394px] left-[116px] font-['Liberation_Serif',serif] text-[21px] leading-6 font-bold text-[#cf4a58] [paint-order:stroke_fill] [-webkit-text-stroke:2px_#d3b4c4]">
        BBS.CHINADE.NET
      </p>
    </main>
  );
}

function RailArrow({ show }: { show?: boolean }) {
  return (
    <span className="flex items-center justify-center">
      {show && <span className="border-y-[3px] border-l-4 border-y-transparent border-l-[#2c343c]" />}
    </span>
  );
}

function ToolRail() {
  return (
    <aside className="flex w-[84px] shrink-0 flex-col overflow-hidden pt-[5px] pl-px">
      <span className="mr-0.5 mb-[5px] h-1 shrink-0 border-y border-dotted border-[#6d82a4]" />
      {railRows.map(([sketch, datum]) => (
        <div key={sketch.label} className="grid h-7 shrink-0 grid-cols-[28px_12px_28px_12px]">
          <ToolButton tool={sketch} />
          <RailArrow show={sketch.menu} />
          {datum && <ToolButton tool={datum} />}
          {datum && <RailArrow show={datum.menu} />}
        </div>
      ))}
    </aside>
  );
}

export default function App() {
  return (
    <div className="flex h-screen flex-col overflow-hidden bg-[#0a4ee0] font-['Noto_Sans_CJK_SC',sans-serif] text-[12px] text-[#20262e]">
      <TitleBar />
      <div className="mr-[3px] ml-1 flex min-h-0 flex-1 flex-col bg-[#dbe8f2]">
        <MenuBar />
        <div className="flex flex-col pt-0.5 pb-[3px]">
          <ToolBar groups={fileRow}>
            <button
              type="button"
              aria-label="选取框"
              className="ml-1 flex w-[39px] items-center rounded-[3px] border border-[#8fa5ba] bg-linear-to-b from-[#c3d9ea] to-[#cdeaf8] pl-0.5"
            >
              {marquee}
              <span className="ml-1 flex h-full flex-1 items-center justify-center border-l border-[#8fa5ba]">
                <span className="border-x-[3px] border-t-[4px] border-x-transparent border-t-[#2c343c]" />
              </span>
            </button>
          </ToolBar>
          <ToolBar groups={viewRow} />
          <ToolBar groups={sketchRow} />
        </div>
        <MessageBar />
        <div className="flex min-h-0 flex-1">
          <ModelTree />
          <SketchCanvas />
          <ToolRail />
        </div>
      </div>
    </div>
  );
}
